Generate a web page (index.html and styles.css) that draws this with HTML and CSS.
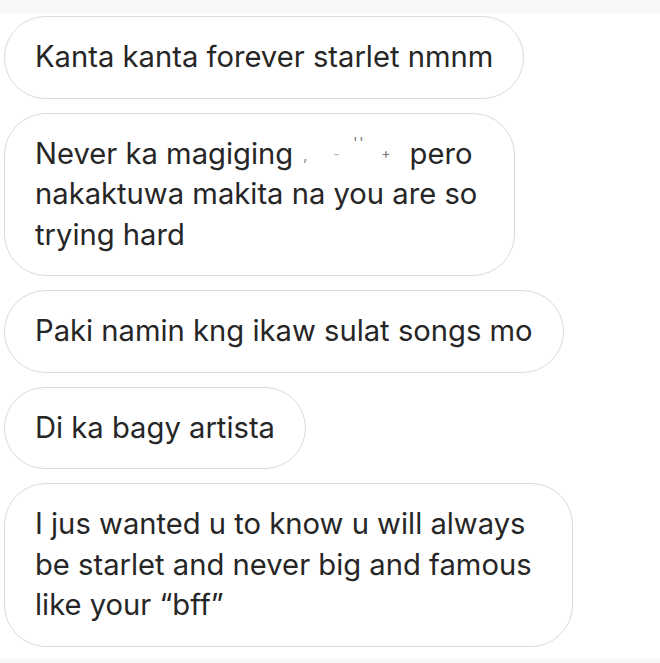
FILE: index.html
```html
<!DOCTYPE html>
<html>
<head>
<meta charset="utf-8">
<link rel="stylesheet" href="styles.css">
</head>
<body>
<div class="topband"></div>
<main class="thread">
  <div class="bubble">Kanta kanta forever starlet nmnm</div>
  <div class="bubble multi b2">Never ka magiging <span class="redact"><i class="m1">,</i><i class="m2">-</i><i class="m3">'</i><i class="m4">'</i><i class="m5">+</i></span> pero<br>nakaktuwa makita na you are so<br>trying hard</div>
  <div class="bubble">Paki namin kng ikaw sulat songs mo</div>
  <div class="bubble">Di ka bagy artista</div>
  <div class="bubble multi b5">I jus wanted u to know u will always<br>be starlet and never big and famous<br>like your “bff”</div>
</main>
<div class="bottomband"></div>
</body>
</html>
```
FILE: styles.css
```css
html, body {
  margin: 0;
  padding: 0;
  background: #ffffff;
}
body {
  width: 660px;
  height: 663px;
  overflow: hidden;
  font-family: Inter, "Liberation Sans", sans-serif;
  color: #262626;
}
.topband {
  height: 13px;
  background: #f7f7f7;
}
.thread {
  display: flex;
  flex-direction: column;
  align-items: flex-start;
  gap: 14px;
  padding: 3px 0 0 4px;
}
.bubble {
  box-sizing: border-box;
  border: 1.5px solid #dadada;
  border-radius: 42px;
  padding: 20px 30px 20px 30px;
  font-size: 29.2px;
  line-height: 40.5px;
  white-space: nowrap;
  background: #fff;
}
.b2 { width: 511px; }
.b5 { width: 569px; }
.redact {
  display: inline-block;
  width: 100px;
  height: 20px;
  position: relative;
  vertical-align: baseline;
}
.redact i {
  position: absolute;
  font-style: normal;
  font-size: 14px;
  line-height: 14px;
  color: #777;
}
.m1 { left: 2px; top: 4px; }
.m2 { left: 32px; top: 3px; color: #b5b5b5 !important; }
.m3 { left: 52px; top: -8px; }
.m4 { left: 58px; top: -8px; }
.m5 { left: 80px; top: 2px; }
.bottomband {
  position: absolute;
  left: 0;
  right: 0;
  top: 659px;
  height: 4px;
  background: #f7f7f7;
}
```
